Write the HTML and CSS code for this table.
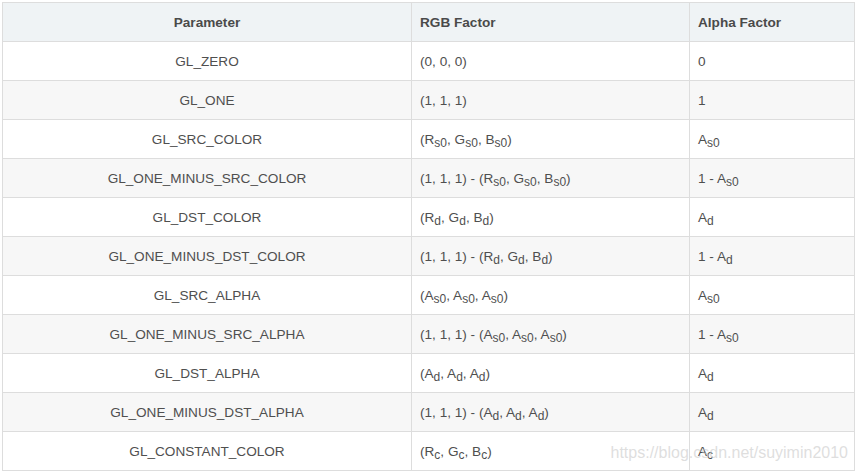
FILE: index.html
```html
<!DOCTYPE html>
<html>
<head>
<meta charset="utf-8">
<link rel="stylesheet" href="styles.css">
</head>
<body>
<div class="wrap">
<table class="blend">
<colgroup><col class="c1"><col class="c2"><col class="c3"></colgroup>
<thead>
<tr><th class="param">Parameter</th><th>RGB Factor</th><th>Alpha Factor</th></tr>
</thead>
<tbody>
<tr><td class="param">GL_ZERO</td><td>(0, 0, 0)</td><td>0</td></tr>
<tr><td class="param">GL_ONE</td><td>(1, 1, 1)</td><td>1</td></tr>
<tr><td class="param">GL_SRC_COLOR</td><td>(R<sub>s0</sub>, G<sub>s0</sub>, B<sub>s0</sub>)</td><td>A<sub>s0</sub></td></tr>
<tr><td class="param">GL_ONE_MINUS_SRC_COLOR</td><td>(1, 1, 1) - (R<sub>s0</sub>, G<sub>s0</sub>, B<sub>s0</sub>)</td><td>1 - A<sub>s0</sub></td></tr>
<tr><td class="param">GL_DST_COLOR</td><td>(R<sub>d</sub>, G<sub>d</sub>, B<sub>d</sub>)</td><td>A<sub>d</sub></td></tr>
<tr><td class="param">GL_ONE_MINUS_DST_COLOR</td><td>(1, 1, 1) - (R<sub>d</sub>, G<sub>d</sub>, B<sub>d</sub>)</td><td>1 - A<sub>d</sub></td></tr>
<tr><td class="param">GL_SRC_ALPHA</td><td>(A<sub>s0</sub>, A<sub>s0</sub>, A<sub>s0</sub>)</td><td>A<sub>s0</sub></td></tr>
<tr><td class="param">GL_ONE_MINUS_SRC_ALPHA</td><td>(1, 1, 1) - (A<sub>s0</sub>, A<sub>s0</sub>, A<sub>s0</sub>)</td><td>1 - A<sub>s0</sub></td></tr>
<tr><td class="param">GL_DST_ALPHA</td><td>(A<sub>d</sub>, A<sub>d</sub>, A<sub>d</sub>)</td><td>A<sub>d</sub></td></tr>
<tr><td class="param">GL_ONE_MINUS_DST_ALPHA</td><td>(1, 1, 1) - (A<sub>d</sub>, A<sub>d</sub>, A<sub>d</sub>)</td><td>A<sub>d</sub></td></tr>
<tr><td class="param">GL_CONSTANT_COLOR</td><td>(R<sub>c</sub>, G<sub>c</sub>, B<sub>c</sub>)</td><td>A<sub>c</sub></td></tr>
</tbody>
</table>
<div class="watermark">https://blog.csdn.net/suyimin2010</div>
</div>
</body>
</html>
```
FILE: styles.css
```css
html, body {
  margin: 0;
  padding: 0;
  background: #ffffff;
}
.wrap {
  position: relative;
  padding: 2px 1px 0 2px;
  width: 852px;
}
.blend {
  border-collapse: collapse;
  table-layout: fixed;
  width: 852px;
  font-family: "Liberation Sans", Arial, sans-serif;
  font-size: 13.6px;
  color: #4f4f4f;
}
.c1 { width: 409px; }
.c2 { width: 278px; }
.c3 { width: 165px; }
.blend th, .blend td {
  border: 1px solid #dddddd;
  height: 39px;
  padding: 1px 8px 0 8px;
  box-sizing: border-box;
  text-align: left;
  vertical-align: middle;
  line-height: 18px;
}
.blend th {
  background: #eff3f5;
  font-weight: bold;
  color: #4a4a4a;
}
.blend .param {
  text-align: center;
}
.blend tbody tr:nth-child(even) td {
  background: #f7f7f7;
}
.blend sub {
  font-size: 12px;
  vertical-align: -3px;
  line-height: 0;
}
.watermark {
  position: absolute;
  right: 7px;
  bottom: 9px;
  font-family: "Liberation Sans", Arial, sans-serif;
  font-size: 16px;
  line-height: 18px;
  color: rgba(200, 200, 200, 0.6);
}
```
